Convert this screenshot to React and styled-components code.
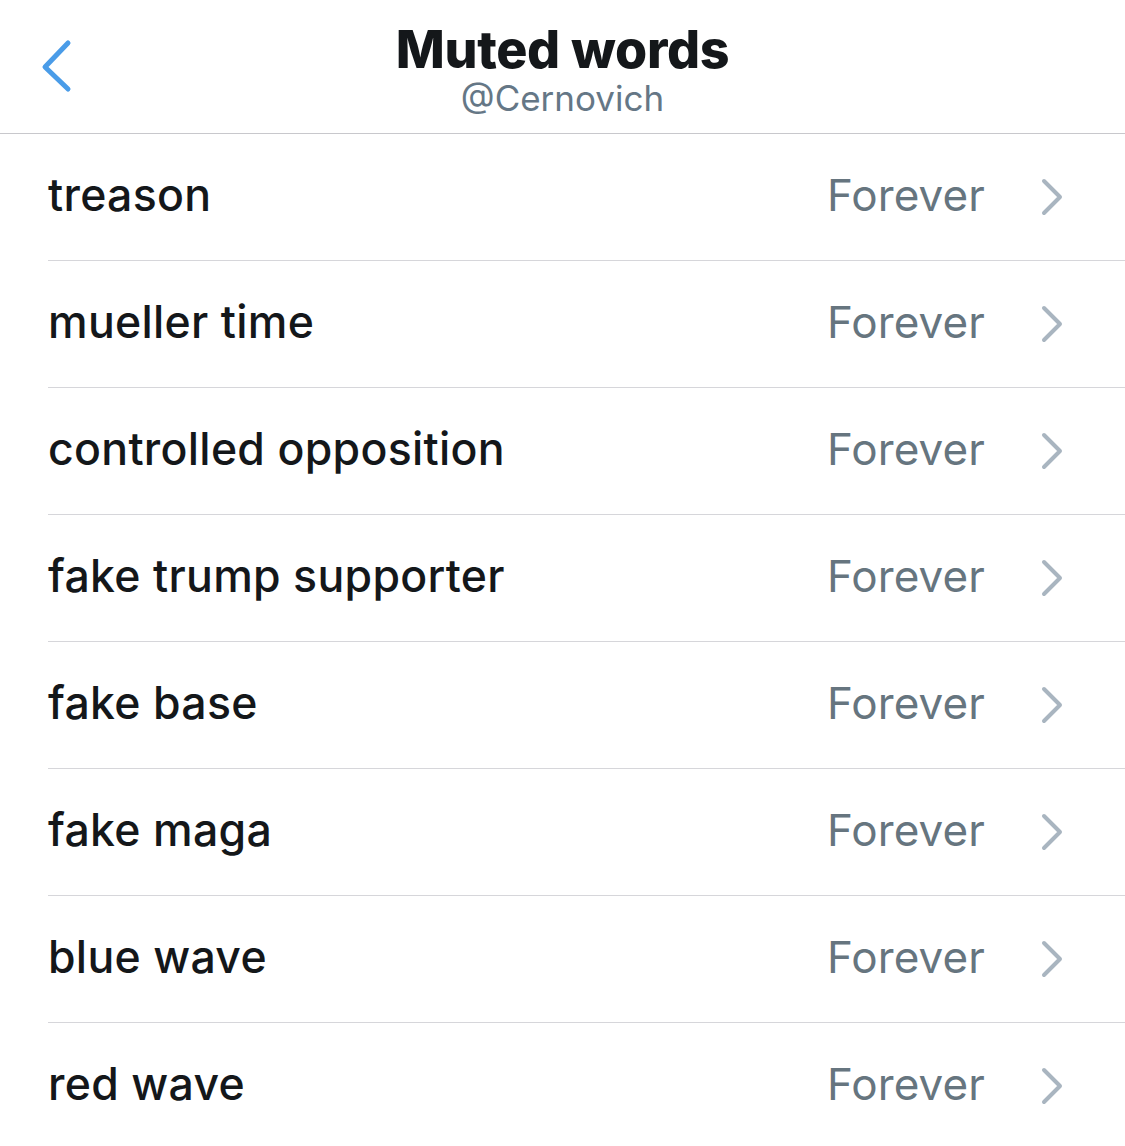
import React from "react";
import styled, { createGlobalStyle } from "styled-components";

const words = [
  "treason",
  "mueller time",
  "controlled opposition",
  "fake trump supporter",
  "fake base",
  "fake maga",
  "blue wave",
  "red wave",
];

function App() {
  return (
    <Page>
      <GlobalStyle />
      <Header>
        <BackButton aria-label="Back">
          <svg width="34" height="54" viewBox="0 0 34 54">
            <path
              d="M30 4 L7 28 L30 50"
              fill="none"
              stroke="#4a9ce8"
              strokeWidth="5"
              strokeLinecap="round"
              strokeLinejoin="round"
            />
          </svg>
        </BackButton>
        <Title>Muted words</Title>
        <Handle>@Cernovich</Handle>
      </Header>

      <List>
        {words.map((word) => (
          <Row key={word}>
            <Word>{word}</Word>
            <Duration>Forever</Duration>
            <Chevron width="24" height="38" viewBox="0 0 24 38">
              <path
                d="M4 3 L20 19 L4 35"
                fill="none"
                stroke="#a9b5c0"
                strokeWidth="4"
                strokeLinecap="round"
                strokeLinejoin="round"
              />
            </Chevron>
          </Row>
        ))}
      </List>
    </Page>
  );
}

const GlobalStyle = createGlobalStyle`
  body {
    margin: 0;
    background: #fff;
    font-family: Inter, "Noto Sans", sans-serif;
  }
`;

const Page = styled.div`
  width: 1125px;
  height: 1146px;
  overflow: hidden;
  background: #fff;
`;

const Header = styled.header`
  position: relative;
  height: 133px;
  display: flex;
  flex-direction: column;
  align-items: center;
  border-bottom: 1px solid #c8c8cc;
`;

const BackButton = styled.div`
  position: absolute;
  left: 38px;
  top: 39px;
  display: flex;
`;

const Title = styled.div`
  margin-top: 21px;
  font-size: 52px;
  font-weight: 800;
  letter-spacing: -0.3px;
  color: #14171a;
  line-height: 58px;
`;

const Handle = styled.div`
  font-size: 35px;
  color: #657786;
  line-height: 38px;
`;

const List = styled.div`
  display: flex;
  flex-direction: column;
`;

const Row = styled.div`
  height: 126px;
  margin-left: 48px;
  padding-right: 61px;
  display: flex;
  align-items: center;
  border-bottom: 1px solid #d6d6da;
`;

const Word = styled.div`
  flex: 1;
  margin-top: -5px;
  font-size: 44.6px;
  font-weight: 500;
  color: #14171a;
  letter-spacing: 0.3px;
`;

const Duration = styled.div`
  margin-top: -5px;
  font-size: 44px;
  color: #66757f;
  margin-right: 55px;
  letter-spacing: 0.1px;
`;

const Chevron = styled.svg`
  display: block;
`;

export default App;
